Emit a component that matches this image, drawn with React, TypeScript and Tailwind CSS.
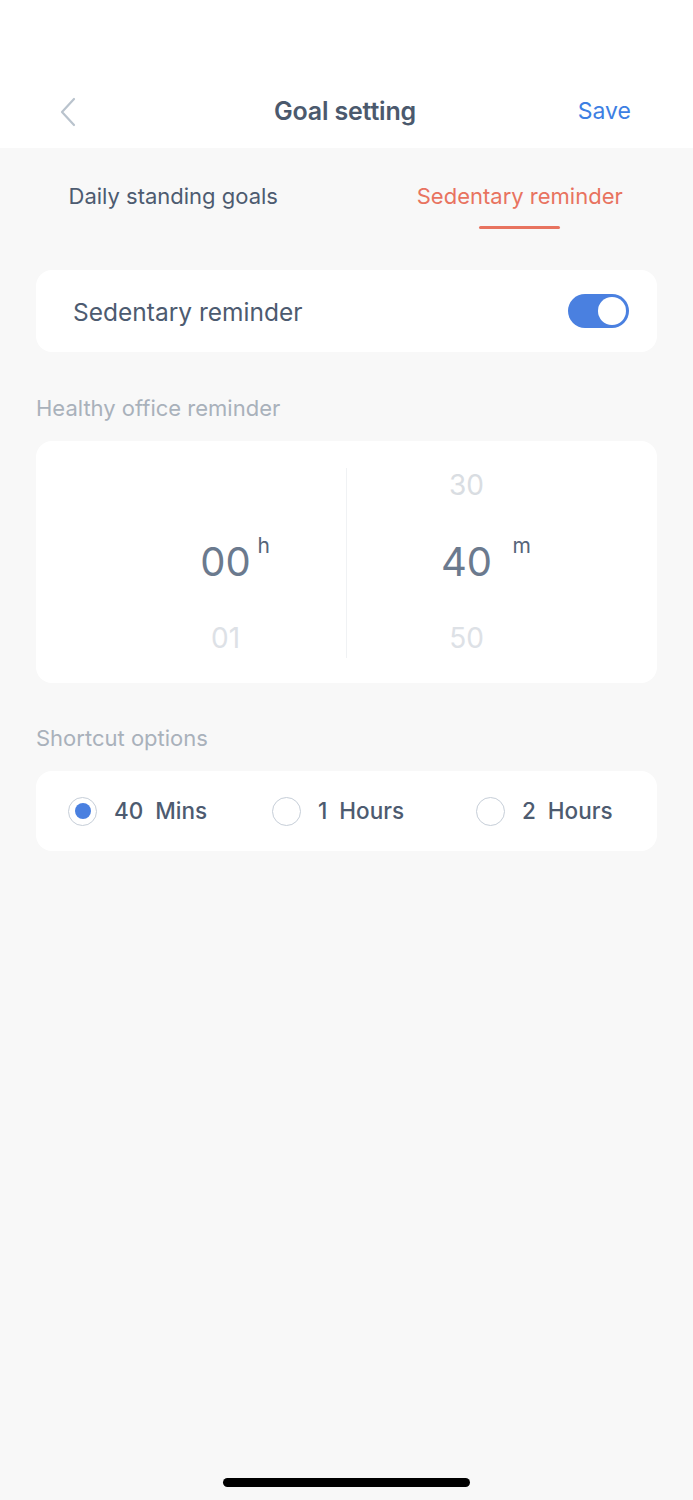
import React, { useState } from 'react';

const FONT = { fontFamily: 'Inter, "Noto Sans", "Liberation Sans", sans-serif' };

const BackIcon: React.FC = () => (
  <svg width="18" height="30" viewBox="0 0 18 30" fill="none">
    <path d="M15 2 L3 15 L15 28" stroke="#b9c3cd" strokeWidth="2.2" strokeLinecap="round" strokeLinejoin="round" />
  </svg>
);

const Radio: React.FC<{ checked: boolean }> = ({ checked }) => (
  <span className="flex h-[29px] w-[29px] shrink-0 items-center justify-center rounded-full border-[1.5px] border-[#c6ced8] bg-white">
    {checked && <span className="h-[16px] w-[16px] rounded-full bg-[#4a80e0]" />}
  </span>
);

const SHORTCUTS = ['40  Mins', '1  Hours', '2  Hours'];

export default function App() {
  const [tab, setTab] = useState(1);
  const [enabled, setEnabled] = useState(true);
  const [shortcut, setShortcut] = useState(0);

  return (
    <div style={FONT} className="flex min-h-[1500px] w-[693px] flex-col bg-[#f8f8f8]">
      {/* Header */}
      <header className="bg-white pt-[75px]">
        <div className="flex h-[73px] items-center justify-between pl-[59px] pr-[62px]">
          <button className="flex w-[60px] items-center">
            <BackIcon />
          </button>
          <h1 className="text-[25px] font-semibold tracking-[-0.2px] text-[#4b596d]">Goal setting</h1>
          <button className="w-[60px] text-right text-[23px] text-[#3d7fe3]">Save</button>
        </div>
      </header>

      {/* Tabs */}
      <div className="grid grid-cols-2">
        {['Daily standing goals', 'Sedentary reminder'].map((label, i) => (
          <button key={label} onClick={() => setTab(i)} className="flex flex-col items-center pt-[34px]">
            <span className={`text-[22px] leading-[28px] ${tab === i ? 'text-[#e8735f]' : 'text-[#4d5b70]'}`}>
              {label}
            </span>
            <span className={`mt-[16px] h-[3px] w-[81px] rounded-full ${tab === i ? 'bg-[#e8735f]' : 'bg-transparent'}`} />
          </button>
        ))}
      </div>

      <main className="px-[36px]">
        {/* Reminder toggle */}
        <div className="mt-[41px] flex h-[82px] items-center justify-between rounded-[16px] bg-white pl-[37px] pr-[28px]">
          <span className="pt-[3px] text-[24.5px] text-[#4d5b70]">Sedentary reminder</span>
          <button
            onClick={() => setEnabled(!enabled)}
            className={`flex h-[34px] w-[61px] items-center rounded-full px-[3px] ${
              enabled ? 'justify-end bg-[#4a80e0]' : 'justify-start bg-[#d5dbe2]'
            }`}
          >
            <span className="h-[28px] w-[28px] rounded-full bg-white" />
          </button>
        </div>

        {/* Picker */}
        <p className="mt-[42px] text-[22px] leading-[28px] text-[#a9b1bb]">Healthy office reminder</p>
        <div className="mt-[19px] grid h-[242px] grid-cols-2 rounded-[16px] bg-white py-[27px]">
          <div className="flex justify-end border-r border-[#f0f2f4]">
            <div className="relative -mt-[3px] mr-[80px] flex w-[80px] flex-col items-center">
              <span className="flex h-[40px] items-center text-[28px] text-[#dfe3e7] opacity-0">23</span>
              <span className="mt-[37px] flex h-[40px] items-center text-[40px] text-[#6b7a8e]">00</span>
              <span className="absolute left-[72px] top-[65px] text-[21px] text-[#56657a]">h</span>
              <span className="mt-[36px] flex h-[40px] items-center text-[28px] text-[#dde1e6]">01</span>
            </div>
          </div>
          <div className="flex justify-start">
            <div className="relative -mt-[3px] ml-[80px] flex w-[80px] flex-col items-center">
              <span className="flex h-[40px] items-center text-[28px] text-[#d9dde2]">30</span>
              <span className="mt-[37px] flex h-[40px] items-center text-[40px] text-[#6b7a8e]">40</span>
              <span className="absolute left-[86px] top-[65px] text-[21px] text-[#56657a]">m</span>
              <span className="mt-[36px] flex h-[40px] items-center text-[28px] text-[#dde1e6]">50</span>
            </div>
          </div>
        </div>

        {/* Shortcuts */}
        <p className="mt-[41px] text-[22px] leading-[28px] text-[#a9b1bb]">Shortcut options</p>
        <div className="mt-[19px] flex h-[80px] items-center rounded-[16px] bg-white pl-[32px]">
          {SHORTCUTS.map((label, i) => (
            <button key={label} onClick={() => setShortcut(i)} className="flex w-[204px] shrink-0 items-center gap-[17px]">
              <Radio checked={shortcut === i} />
              <span className="whitespace-pre text-[22.5px] font-medium text-[#4d5b70]">{label}</span>
            </button>
          ))}
        </div>
      </main>

      {/* Home indicator */}
      <div className="mt-auto flex justify-center pb-[13px]">
        <span className="h-[9px] w-[247px] rounded-full bg-black" />
      </div>
    </div>
  );
}
